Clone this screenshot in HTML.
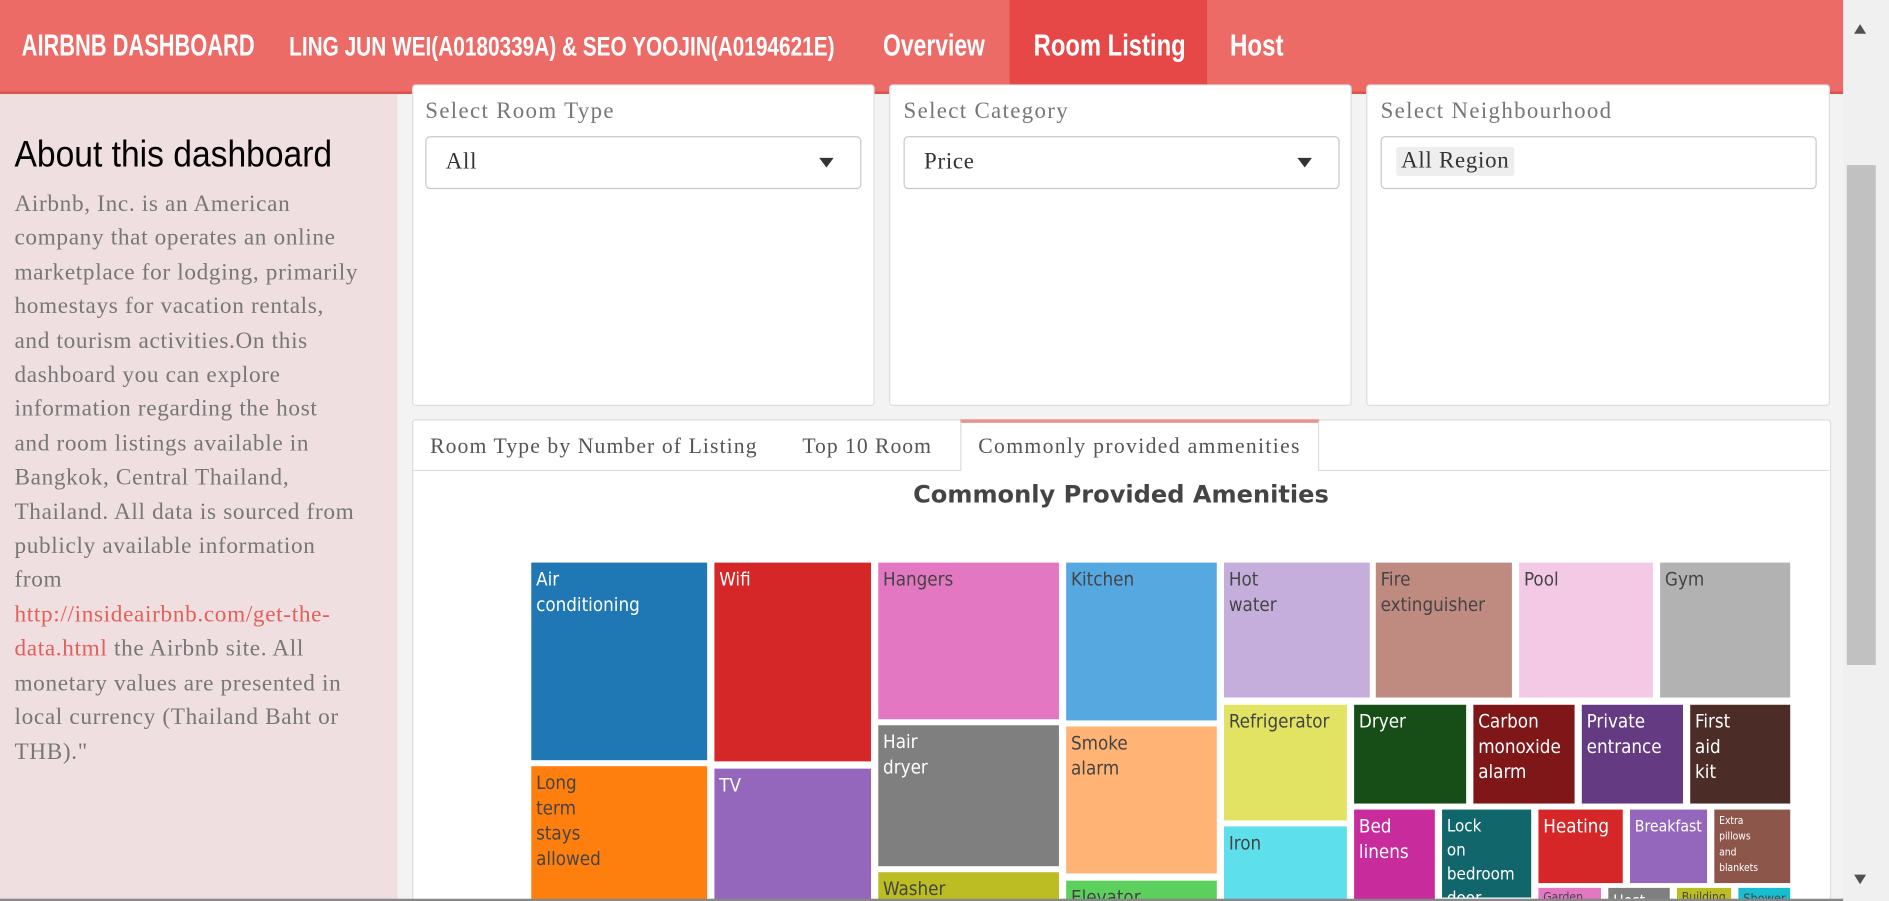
<!DOCTYPE html>
<html><head><meta charset="utf-8"><style>
html,body{margin:0;padding:0;width:1889px;height:901px;overflow:hidden;background:#f3f3f3}
#w{position:absolute;left:0;top:0;width:1568px;height:748px;transform:scale(1.20472);transform-origin:0 0;background:#f3f3f3;overflow:hidden}
.a{position:absolute}
.nar{font-family:"Liberation Sans",sans-serif}
.ser{font-family:"Liberation Serif",serif}
#hdr{left:0;top:0;width:1530px;height:76px;background:#ed6b67;border-bottom:2px solid #e0504c}
#hdr span{position:absolute;color:#fff;top:24px;font-size:25px;font-weight:bold;white-space:nowrap;transform-origin:0 0}
#side{left:0;top:78px;width:330px;height:670px;background:#f0dfe0}
.pan{background:#fff;border:1px solid #ddd;border-radius:3px}
.lbl{font-size:19px;color:#777;top:82px;letter-spacing:1.1px}
.sel{height:42px;border:1px solid #c8c8c8;border-radius:4px;background:#fff;top:113px}
.sel span{position:absolute;left:16px;top:10px;font-size:19px;color:#333;letter-spacing:0.6px}
.tri{position:absolute;right:22px;top:17px;width:0;height:0;border-left:6px solid transparent;border-right:6px solid transparent;border-top:8px solid #333}
.t{position:absolute;box-sizing:border-box;padding:4px 4px;font-family:"DejaVu Sans Condensed","DejaVu Sans",sans-serif;font-size:15.5px;line-height:21px;color:#fff;overflow:hidden}
.d{color:#444}
.tab{font-size:18px;color:#555;top:360px;white-space:nowrap}
</style></head><body><div id="w">
<div id="hdr" class="a nar">
<div class="a" style="left:838px;top:0;width:164px;height:76px;background:#e64848"></div>
<span style="left:18px;transform:scaleX(0.725)">AIRBNB DASHBOARD</span>
<span style="left:240px;font-size:22px;top:26px;transform:scaleX(0.785)">LING JUN WEI(A0180339A) &amp; SEO YOOJIN(A0194621E)</span>
<span style="left:733px;transform:scaleX(0.76)">Overview</span>
<span style="left:858px;transform:scaleX(0.79)">Room Listing</span>
<span style="left:1021px;transform:scaleX(0.8)">Host</span>
</div>
<div class="a" style="left:1530px;top:0;width:38px;height:748px;background:#f0f0f0"></div>
<div class="a" style="left:1533px;top:137px;width:24px;height:415px;background:#c1c1c1"></div>
<div class="a" style="left:1539px;top:20px;width:0;height:0;border-left:5px solid transparent;border-right:5px solid transparent;border-bottom:8px solid #505050"></div>
<div class="a" style="left:1539px;top:726px;width:0;height:0;border-left:5px solid transparent;border-right:5px solid transparent;border-top:8px solid #505050"></div>
<div id="side" class="a">
<div class="a nar" style="left:12px;top:32px;font-size:31px;color:#000;white-space:nowrap;transform:scaleX(0.9);transform-origin:0 0">About this dashboard</div>
<div class="a ser" style="left:12px;top:78px;width:320px;font-size:19.3px;line-height:28.4px;color:#777;white-space:nowrap;letter-spacing:0.55px">Airbnb, Inc. is an American<br>company that operates an online<br>marketplace for lodging, primarily<br>homestays for vacation rentals,<br>and tourism activities.On this<br>dashboard you can explore<br>information regarding the host<br>and room listings available in<br>Bangkok, Central Thailand,<br>Thailand. All data is sourced from<br>publicly available information<br>from<br><span style="color:#e0605c">http://insideairbnb.com/get-the-<br>data.html</span> the Airbnb site. All<br>monetary values are presented in<br>local currency (Thailand Baht or<br>THB)."</div>
</div>
<div class="a pan" style="left:342px;top:70px;width:382px;height:265px"></div>
<div class="a pan" style="left:738px;top:70px;width:382px;height:265px"></div>
<div class="a pan" style="left:1134px;top:70px;width:383px;height:265px"></div>
<div class="a ser lbl" style="left:353px">Select Room Type</div>
<div class="a ser lbl" style="left:750px">Select Category</div>
<div class="a ser lbl" style="left:1146px">Select Neighbourhood</div>
<div class="a sel ser" style="left:353px;width:360px"><span>All</span><div class="tri"></div></div>
<div class="a sel ser" style="left:750px;width:360px"><span>Price</span><div class="tri"></div></div>
<div class="a sel ser" style="left:1146px;width:360px"><span style="left:12px;top:8px;background:#eee;padding:1px 4px;border-radius:2px">All Region</span></div>
<div class="a pan" style="left:342px;top:348px;width:1176px;height:420px"></div>
<div class="a" style="left:343px;top:390px;width:1175px;height:1px;background:#ddd"></div>
<div class="a" style="left:797px;top:348px;width:298px;height:43px;background:#fff;border-left:1px solid #ddd;border-right:1px solid #ddd;border-top:3px solid #e89590;box-sizing:border-box"></div>
<div class="a ser tab" style="left:357px;letter-spacing:0.9px">Room Type by Number of Listing</div>
<div class="a ser tab" style="left:666px;letter-spacing:0.8px">Top 10 Room</div>
<div class="a ser tab" style="left:812px;letter-spacing:1.1px">Commonly provided ammenities</div>
<div class="a" style="left:343px;top:398px;width:1175px;text-align:center;font-family:'DejaVu Sans','Liberation Sans',sans-serif;font-weight:bold;font-size:20px;color:#444">Commonly Provided Amenities</div>

<div class="t" style="left:441px;top:467px;width:146px;height:164px;background:#1f77b4">Air<br>conditioning</div>
<div class="t d" style="left:441px;top:636px;width:146px;height:130px;background:#ff7f0e">Long<br>term<br>stays<br>allowed</div>
<div class="t" style="left:593px;top:467px;width:130px;height:165px;background:#d62728">Wifi</div>
<div class="t" style="left:593px;top:638px;width:130px;height:130px;background:#9467bd">TV</div>
<div class="t d" style="left:729px;top:467px;width:150px;height:130px;background:#e377c2">Hangers</div>
<div class="t" style="left:729px;top:602px;width:150px;height:117px;background:#7f7f7f">Hair<br>dryer</div>
<div class="t d" style="left:729px;top:724px;width:150px;height:40px;background:#bcbd22">Washer</div>
<div class="t d" style="left:885px;top:467px;width:125px;height:131px;background:#56a8e0">Kitchen</div>
<div class="t d" style="left:885px;top:603px;width:125px;height:122px;background:#ffb374">Smoke<br>alarm</div>
<div class="t d" style="left:885px;top:731px;width:125px;height:40px;background:#5cd05c">Elevator</div>
<div class="t d" style="left:1016px;top:467px;width:121px;height:112px;background:#c5aedb">Hot<br>water</div>
<div class="t d" style="left:1142px;top:467px;width:113px;height:112px;background:#bf8b80">Fire<br>extinguisher</div>
<div class="t d" style="left:1261px;top:467px;width:111px;height:112px;background:#f3c9e5">Pool</div>
<div class="t d" style="left:1378px;top:467px;width:108px;height:112px;background:#b2b2b2">Gym</div>
<div class="t d" style="left:1016px;top:585px;width:102px;height:96px;background:#e2e363">Refrigerator</div>
<div class="t d" style="left:1016px;top:686px;width:102px;height:80px;background:#5ee0ec">Iron</div>
<div class="t" style="left:1124px;top:585px;width:93px;height:82px;background:#174d17">Dryer</div>
<div class="t" style="left:1223px;top:585px;width:84px;height:82px;background:#7f1718">Carbon<br>monoxide<br>alarm</div>
<div class="t" style="left:1313px;top:585px;width:84px;height:82px;background:#643b82">Private<br>entrance</div>
<div class="t" style="left:1403px;top:585px;width:83px;height:82px;background:#4b2c27">First<br>aid<br>kit</div>
<div class="t" style="left:1124px;top:672px;width:67px;height:90px;background:#c82b9b">Bed<br>linens</div>
<div class="t" style="left:1197px;top:672px;width:74px;height:73px;background:#11666c;font-size:14px;line-height:20px">Lock<br>on<br>bedroom<br>door</div>
<div class="t" style="left:1277px;top:672px;width:70px;height:61px;background:#d62728">Heating</div>
<div class="t" style="left:1353px;top:672px;width:64px;height:61px;background:#9467bd;font-size:13px">Breakfast</div>
<div class="t" style="left:1423px;top:672px;width:63px;height:61px;background:#8c564b;font-size:8.5px;line-height:13px">Extra<br>pillows<br>and<br>blankets</div>
<div class="t d" style="left:1277px;top:737px;width:52px;height:30px;background:#e377c2;font-size:10px;line-height:14px;padding-top:2px">Garden</div>
<div class="t" style="left:1335px;top:737px;width:51px;height:30px;background:#7f7f7f;font-size:13px;padding-top:1px">Host</div>
<div class="t d" style="left:1392px;top:737px;width:45px;height:30px;background:#bcbd22;font-size:10px;line-height:14px;padding-top:2px">Building</div>
<div class="t d" style="left:1443px;top:737px;width:43px;height:30px;background:#17becf;font-size:10.5px;line-height:14px;padding-top:2px">Shower</div>
<div class="a" style="left:0;top:746px;width:1530px;height:2px;background:#888"></div>
</div></body></html>
